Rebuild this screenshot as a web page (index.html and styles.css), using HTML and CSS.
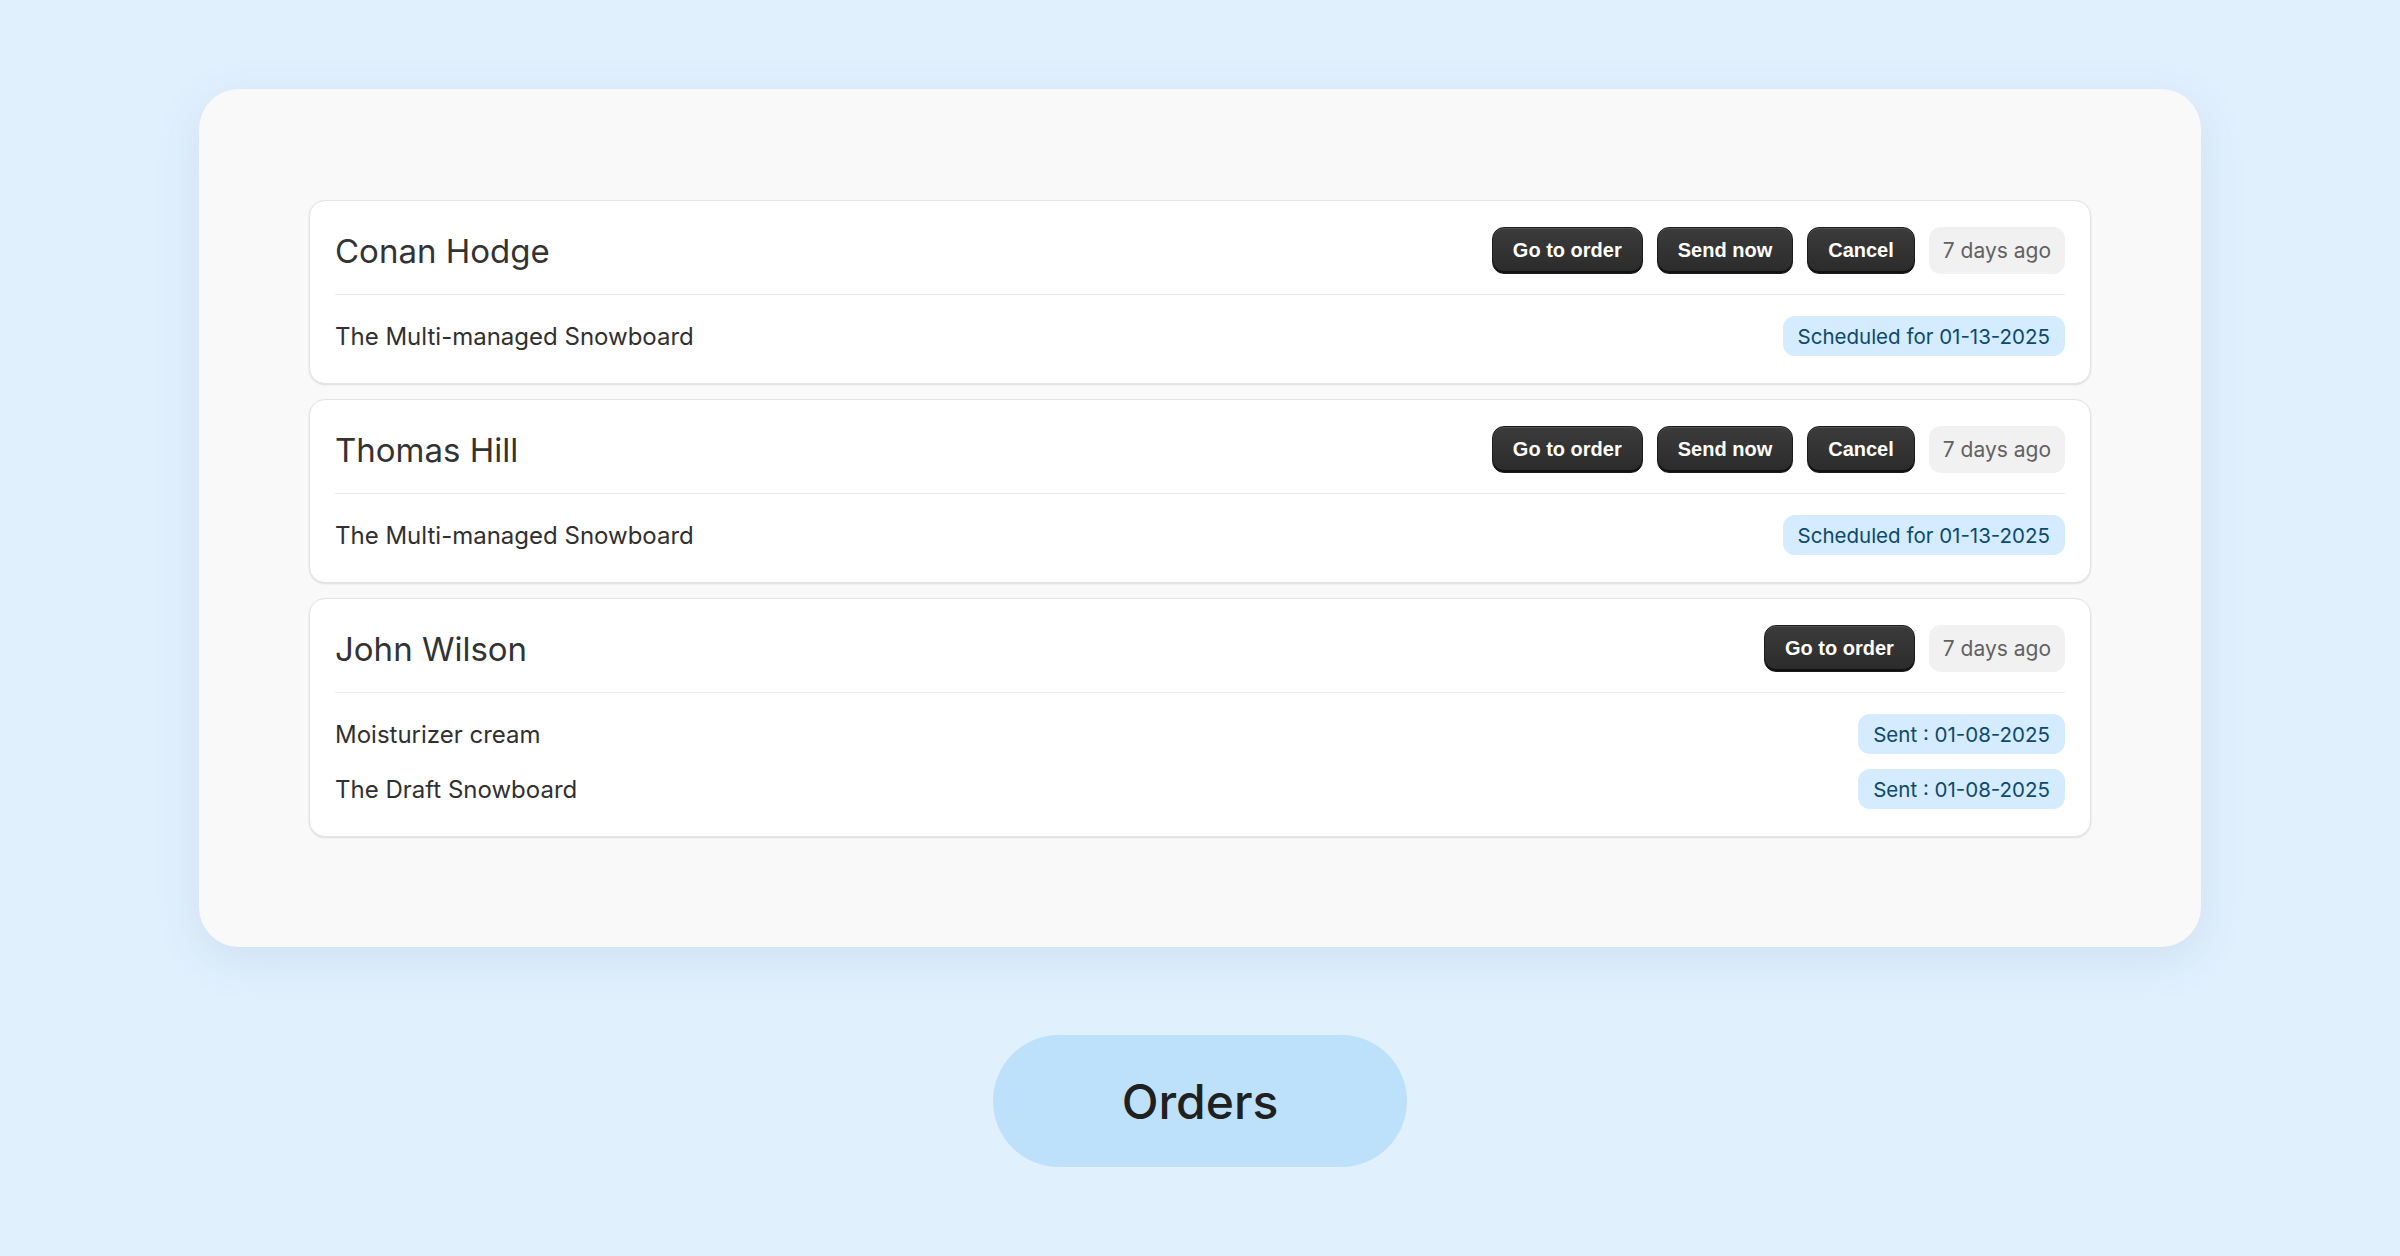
FILE: index.html
```html
<!DOCTYPE html>
<html lang="en">
<head>
  <meta charset="UTF-8">
  <title>Orders</title>
  <link rel="stylesheet" href="styles.css">
</head>
<body>
  <div class="panel">
    <div class="order-list">

      <div class="order-card">
        <div class="order-head">
          <span class="customer">Conan Hodge</span>
          <div class="actions">
            <button class="btn">Go to order</button>
            <button class="btn">Send now</button>
            <button class="btn">Cancel</button>
            <span class="age">7 days ago</span>
          </div>
        </div>
        <div class="order-items">
          <div class="item">
            <span class="product">The Multi-managed Snowboard</span>
            <span class="status">Scheduled for 01-13-2025</span>
          </div>
        </div>
      </div>

      <div class="order-card">
        <div class="order-head">
          <span class="customer">Thomas Hill</span>
          <div class="actions">
            <button class="btn">Go to order</button>
            <button class="btn">Send now</button>
            <button class="btn">Cancel</button>
            <span class="age">7 days ago</span>
          </div>
        </div>
        <div class="order-items">
          <div class="item">
            <span class="product">The Multi-managed Snowboard</span>
            <span class="status">Scheduled for 01-13-2025</span>
          </div>
        </div>
      </div>

      <div class="order-card">
        <div class="order-head">
          <span class="customer">John Wilson</span>
          <div class="actions">
            <button class="btn">Go to order</button>
            <span class="age">7 days ago</span>
          </div>
        </div>
        <div class="order-items">
          <div class="item">
            <span class="product">Moisturizer cream</span>
            <span class="status">Sent : 01-08-2025</span>
          </div>
          <div class="item">
            <span class="product">The Draft Snowboard</span>
            <span class="status">Sent : 01-08-2025</span>
          </div>
        </div>
      </div>

    </div>
  </div>

  <div class="title-pill">Orders</div>
</body>
</html>
```

FILE: styles.css
```css
body {
  margin: 0;
  height: 100vh;
  background-color: #e1f0fd;
  font-family: Inter, "Noto Sans", sans-serif;
  color: #303030;
  display: flex;
  flex-direction: column;
  align-items: center;
  justify-content: center;
  gap: 88px;
}

.panel {
  width: 1782px;
  padding: 111px 110px 110px;
  background-color: #f9f9f9;
  border-radius: 40px;
  box-shadow: 0 12px 48px rgba(40, 90, 140, 0.10);
}

.order-list {
  display: flex;
  flex-direction: column;
  gap: 15px;
}

.order-card {
  background-color: #fff;
  border: 1px solid #e4e4e4;
  border-radius: 16px;
  padding: 26px 25px 27px;
  box-shadow: 0 1px 2px rgba(0, 0, 0, 0.12);
}

.order-head {
  display: flex;
  align-items: center;
  justify-content: space-between;
  padding-bottom: 20px;
  border-bottom: 1px solid #ebebeb;
}

.customer {
  font-size: 33px;
  color: #333;
}

.actions {
  display: flex;
  align-items: center;
  gap: 14px;
}

.btn {
  height: 47px;
  padding: 0 20px;
  font-family: "Liberation Sans", Arial, sans-serif;
  font-weight: bold;
  font-size: 20px;
  color: #fff;
  background: linear-gradient(#3b3b3b, #2b2b2b);
  border: 1px solid #1c1c1c;
  border-radius: 12px;
  box-shadow: inset 0 -2px 0 #111, inset 0 1px 0 rgba(255, 255, 255, 0.12);
  cursor: pointer;
}

.age {
  height: 47px;
  padding: 0 14px;
  display: flex;
  align-items: center;
  font-size: 21px;
  color: #616161;
  background-color: #f1f1f1;
  border-radius: 12px;
}

.order-items {
  display: flex;
  flex-direction: column;
  gap: 15px;
  padding-top: 21px;
}

.item {
  display: flex;
  align-items: center;
  justify-content: space-between;
}

.product {
  font-size: 24px;
  color: #303030;
}

.status {
  height: 40px;
  padding: 0 15px;
  display: flex;
  align-items: center;
  font-size: 20.5px;
  color: #0b4a6e;
  background-color: #d5ebff;
  border-radius: 12px;
}

.title-pill {
  width: 414px;
  height: 132px;
  display: flex;
  align-items: center;
  justify-content: center;
  font-size: 48px;
  font-weight: 500;
  color: #202020;
  background-color: #bde0fb;
  border-radius: 66px;
}
```
